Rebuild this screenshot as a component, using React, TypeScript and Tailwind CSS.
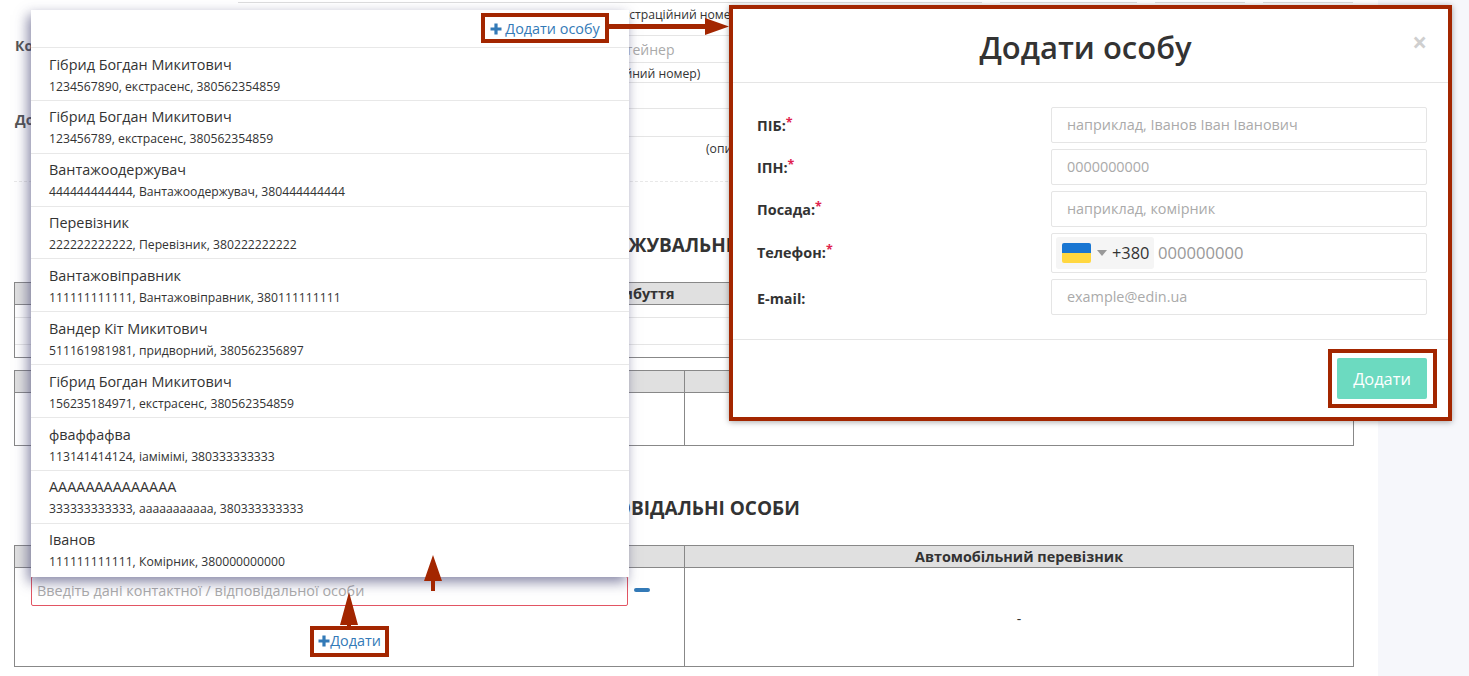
const people = [
  ["Гібрид Богдан Микитович", "1234567890, екстрасенс, 380562354859"],
  ["Гібрид Богдан Микитович", "123456789, екстрасенс, 380562354859"],
  ["Вантажоодержувач", "444444444444, Вантажоодержувач, 380444444444"],
  ["Перевізник", "222222222222, Перевізник, 380222222222"],
  ["Вантажовіправник", "111111111111, Вантажовіправник, 380111111111"],
  ["Вандер Кіт Микитович", "511161981981, придворний, 380562356897"],
  ["Гібрид Богдан Микитович", "156235184971, екстрасенс, 380562354859"],
  ["фваффафва", "113141414124, іамімімі, 380333333333"],
  ["АААААААААААААА", "333333333333, ааааааааааа, 380333333333"],
  ["Іванов", "111111111111, Комірник, 380000000000"],
];

const Plus = ({ size = 12 }: { size?: number }) => (
  <svg width={size} height={size} viewBox="0 0 12 12" className="shrink-0">
    <path d="M4.4 0.5h3.2v3.9h3.9v3.2H7.6v3.9H4.4V7.6H0.5V4.4h3.9z" fill="#337ab7" />
  </svg>
);

const Star = () => <sup className="top-[-4px] text-[#e0234e] text-[12.5px]">*</sup>;

const Field = ({ label, required, placeholder, labelClass = "pt-[2px]" }: { label: string; required?: boolean; placeholder: string; labelClass?: string }) => (
  <div className="flex items-center h-[36px] mb-[6px]">
    <label className={`w-[294px] text-[14.4px] font-bold text-[#333] ${labelClass}`}>
      {label}
      {required && <Star />}
    </label>
    <div className="w-[376px] h-[36px] flex items-center pl-[15px] pb-[1px] border border-[#e5e5e5] rounded-[2px] text-[14.4px] text-[#aaa]">
      {placeholder}
    </div>
  </div>
);

export default function App() {
  return (
    <div className="relative flex h-[676px] overflow-hidden bg-[#f6f7fb] font-['Open_Sans','Noto_Sans',sans-serif] text-[#333]">
      <main className="w-[1378px] h-[676px] shrink-0 bg-white pl-[14px] pr-[24px]">
        <div className="flex gap-[18px] pl-[224px] h-[3px]">
          <div className="w-[744px] border-b border-[#ddd]" />
          <div className="w-[137px] border-b border-[#ddd]" />
          <div className="w-[90px] border-b border-[#ddd]" />
          <div className="w-[90px] border-b border-[#ddd]" />
        </div>

        <section className="flex h-[179px] border-b border-dashed border-[#e8e8e8]">
          <div className="w-[224px] shrink-0 pl-[1px] text-[14px] font-bold text-[#555]">
            <div className="mt-[32px]">Контейнер</div>
            <div className="mt-[53px]">Додатково</div>
          </div>
          <div className="flex-1">
            <div className="h-[33px] border-b border-[#e5e5e5] pl-[371px] pt-[3px] text-[12.2px]">Реєстраційний номер</div>
            <div className="h-[27px] border-b border-[#e5e5e5] pl-[362px] pt-[3px] text-[14px] text-[#aaa]">Контейнер</div>
            <div className="h-[20px] border-b border-[#e5e5e5] pl-[326px] pt-[2px] text-[12.2px]">(реєстраційний номер)</div>
            <div className="h-[26px] border-b border-[#e5e5e5]" />
            <div className="h-[28px] border-b border-[#e5e5e5]" />
            <div className="pl-[468px] pt-[3px] text-[12.2px]">(опис)</div>
          </div>
        </section>

        <h2 className="mt-[49px] h-[28px] pl-[14px] text-center text-[19px] leading-[28px] font-bold">СУПРОВОДЖУВАЛЬНІ ДОКУМЕНТИ</h2>

        <div className="mt-[23px] h-[76px] border border-[#888]">
          <div className="h-[22px] bg-[#e0e0e0] border-b border-[#888] pl-[549px] text-[14.4px] leading-[21px] font-bold">Дата прибуття</div>
          <div className="h-[13px] border-b border-[#e5e5e5]" />
          <div className="h-[27px] border-b border-[#e5e5e5]" />
        </div>

        <div className="mt-[12px] grid grid-cols-[670px_1fr] grid-rows-[22px_1fr] h-[76px] border border-[#888]">
          <div className="bg-[#e0e0e0] border-b border-r border-[#888]" />
          <div className="bg-[#e0e0e0] border-b border-[#888]" />
          <div className="border-r border-[#888]" />
          <div />
        </div>

        <h2 className="mt-[48px] h-[28px] text-center text-[19px] leading-[28px] font-bold">ВІДПОВІДАЛЬНІ ОСОБИ</h2>

        <div className="mt-[23px] grid grid-cols-[670px_1fr] grid-rows-[22px_1fr] h-[122px] border border-[#888]">
          <div className="bg-[#e0e0e0] border-b border-r border-[#888]" />
          <div className="bg-[#e0e0e0] border-b border-[#888] text-center text-[14.4px] leading-[21px] font-bold">Автомобільний перевізник</div>
          <div className="border-r border-[#888] pl-[16px] pt-[8px]">
            <div className="flex items-center">
              <div className="w-[597px] h-[30px] shrink-0 border border-[#e25563] rounded-[2px] flex items-center pl-[5px] text-[14.4px] text-[#aaa]">
                Введіть дані контактної / відповідальної особи
              </div>
              <div className="ml-[6px] mb-[2px] w-[16px] h-[4px] rounded-[2px] bg-[#337ab7]" />
            </div>
          </div>
          <div className="flex items-center justify-center text-[14px] pt-[2px]">-</div>
        </div>
      </main>

      {/* Annotated dropdown */}
      <div className="absolute left-[31px] top-[10px] w-[598px] h-[567px] bg-white shadow-[-3px_5px_12px_rgba(60,60,110,0.62)]">
        <div className="h-[38px] border-b border-[#e8e8e8]" />
        {people.map(([name, details], i) => (
          <div key={i} className="h-[52.85px] border-b border-[#e8e8e8] last:border-b-0 px-[18px] pt-[5.6px]">
            <div className="text-[14.4px] leading-[22px] text-[#333]">{name}</div>
            <div className="text-[12.2px] leading-[20px] mt-[1px] text-[#333]">{details}</div>
          </div>
        ))}
      </div>

      {/* Callout: add person */}
      <div className="absolute left-[481px] top-[13px] w-[128px] h-[30px] pt-[1px] border-4 border-[#a32600] bg-white flex items-center justify-center gap-[3px] text-[14.4px] text-[#337ab7]">
        <Plus />
        Додати особу
      </div>
      <svg className="absolute left-[609px] top-[15px]" width="122" height="22" viewBox="0 0 122 22">
        <path d="M0 9h96V3l24 8.5-24 8.5v-6H0z" fill="#a32600" />
      </svg>

      {/* Callout: add */}
      <div className="absolute left-[310px] top-[626px] w-[79px] h-[31px] pb-[1px] border-4 border-[#a32600] bg-white flex items-center justify-center text-[14.4px] text-[#337ab7]">
        <Plus />
        Додати
      </div>
      <svg className="absolute left-[339px] top-[592px]" width="20" height="36" viewBox="0 0 20 36">
        <path d="M10 0l9 33H12v3H8v-3H1z" fill="#a32600" />
      </svg>
      <svg className="absolute left-[423px] top-[555px]" width="20" height="37" viewBox="0 0 20 37">
        <path d="M10 0l9 26H12v10H8V26H1z" fill="#a32600" />
      </svg>

      {/* Modal */}
      <div className="absolute left-[729px] top-[5px] w-[723px] h-[416px] border-4 border-[#a32600] bg-white shadow-[0_1px_6px_rgba(0,0,0,0.35)]">
        <div className="relative h-[74px] border-b border-[#e5e5e5] flex items-center justify-center pr-[10px]">
          <h1 className="text-[31px] font-semibold leading-[44px] text-[#333] pt-[2px]">Додати особу</h1>
          <span className="absolute right-[21px] top-[20px] text-[26px] leading-[26px] font-bold text-[#cfcfcf]">×</span>
        </div>
        <div className="pl-[24px] pt-[24px] h-[257px] border-b border-[#e5e5e5]">
          <Field label="ПІБ:" required placeholder="наприклад, Іванов Іван Іванович" />
          <Field label="ІПН:" required placeholder="0000000000" />
          <Field label="Посада:" required placeholder="наприклад, комірник" />
          <div className="flex items-center h-[40px] mb-[6px]">
            <label className="w-[294px] pb-[1px] text-[14.4px] font-bold text-[#333]">
              Телефон:<Star />
            </label>
            <div className="w-[376px] h-[40px] flex items-center pl-[4px] border border-[#e5e5e5] rounded-[2px] text-[16.4px]">
              <div className="w-[98px] h-[32px] flex items-center pl-[6px] bg-[#f5f5f5] rounded-[3px]">
                <div className="w-[29px] h-[20px] rounded-[2px] overflow-hidden">
                  <div className="h-[10px] bg-[#1976d2]" />
                  <div className="h-[10px] bg-[#ffd740]" />
                </div>
                <div className="ml-[6px] w-0 h-0 border-x-[5px] border-x-transparent border-t-[6px] border-t-[#999]" />
                <span className="ml-[5px] text-[#333]">+380</span>
              </div>
              <span className="ml-[4px] text-[16.6px] text-[#999]">000000000</span>
            </div>
          </div>
          <Field label="E-mail:" placeholder="example@edin.ua" labelClass="pt-[4px]" />
        </div>
        <div className="flex justify-end pr-[21px] pt-[18px]">
          <div className="w-[90px] h-[41px] pt-[1px] rounded-[2px] bg-[#6cdac0] flex items-center justify-center text-[16.4px] text-white">Додати</div>
        </div>
      </div>

      {/* Callout: submit */}
      <div className="absolute left-[1328px] top-[349px] w-[109px] h-[59px] border-4 border-[#a32600]" />
    </div>
  );
}
